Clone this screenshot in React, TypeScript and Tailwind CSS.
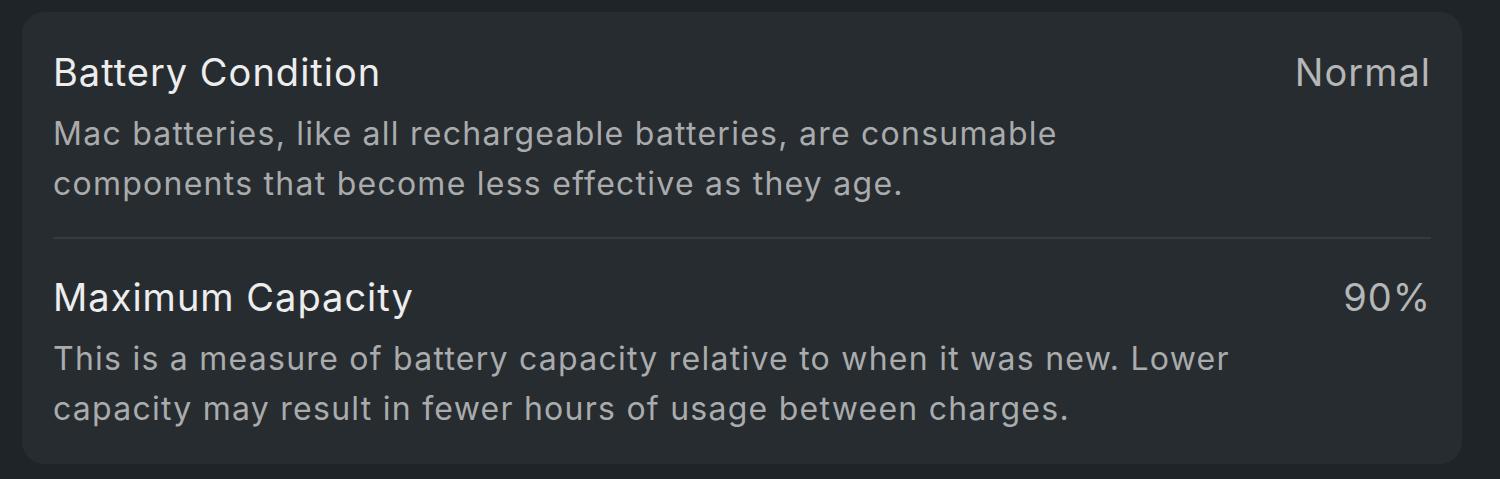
const rows = [
  {
    title: 'Battery Condition',
    value: 'Normal',
    lines: [
      'Mac batteries, like all rechargeable batteries, are consumable',
      'components that become less effective as they age.',
    ],
  },
  {
    title: 'Maximum Capacity',
    value: '90%',
    lines: [
      'This is a measure of battery capacity relative to when it was new. Lower',
      'capacity may result in fewer hours of usage between charges.',
    ],
  },
];

function Row({ title, value, lines }: { title: string; value: string; lines: string[] }) {
  return (
    <div className="flex justify-between items-start">
      <div>
        <div className="text-[38px] leading-[44px] text-[#ededed] tracking-[1px]">{title}</div>
        <div className="mt-[15px] text-[32px] leading-[50px] text-[#a9abac] tracking-[1.25px]">
          {lines.map((l) => (
            <div key={l}>{l}</div>
          ))}
        </div>
      </div>
      <div className="text-[38px] leading-[44px] text-[#b4b6b7] tracking-[1px]">{value}</div>
    </div>
  );
}

export default function App() {
  return (
    <div
      className="w-[1500px] h-[479px] bg-[#1f2428] pt-[12px] pl-[22px]"
      style={{ fontFamily: 'Inter, "Noto Sans", sans-serif' }}
    >
      <div className="w-[1440px] h-[452px] bg-[#272c30] rounded-[22px] px-[31px] pt-[38px]">
        <Row {...rows[0]} />
        <div className="h-[2px] bg-[#363b3f] mt-[28px] mb-[36px]" />
        <Row {...rows[1]} />
      </div>
    </div>
  );
}
